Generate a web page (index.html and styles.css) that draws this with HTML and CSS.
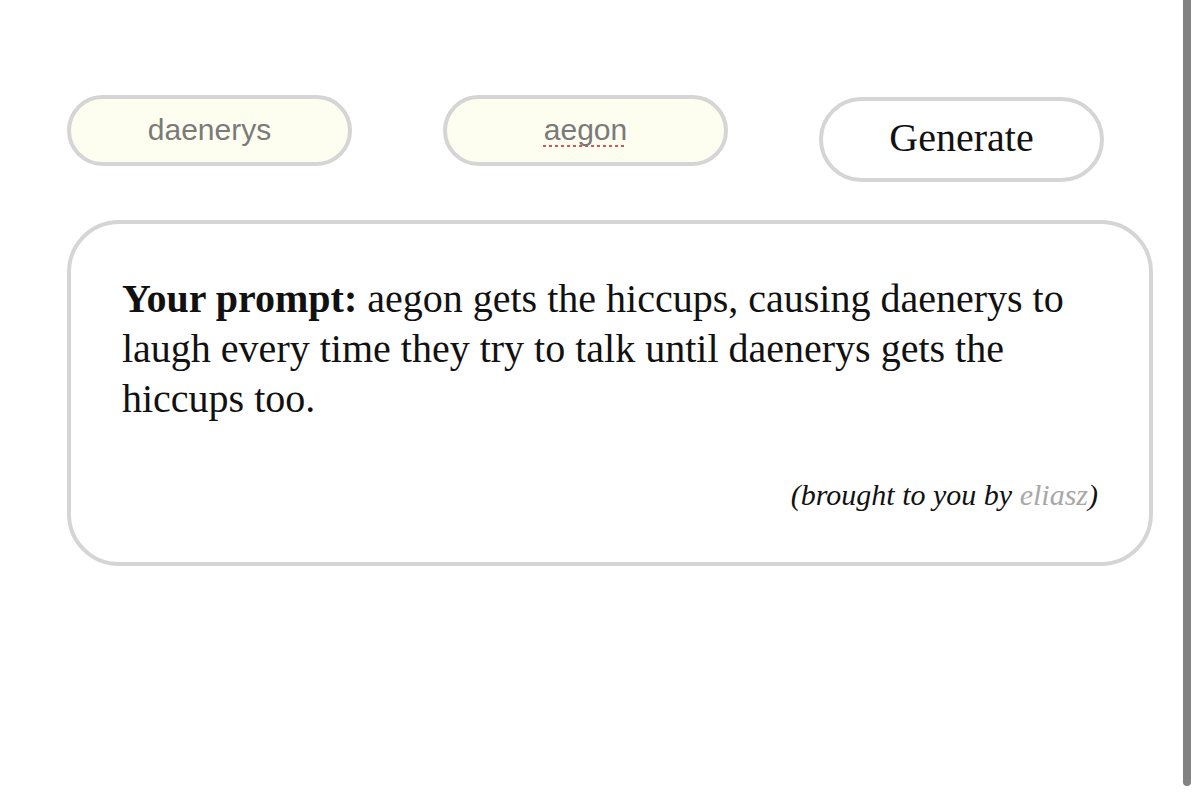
FILE: index.html
```html
<!DOCTYPE html>
<html>
<head>
<meta charset="utf-8">
<link rel="stylesheet" href="styles.css">
</head>
<body>
<div class="page">
  <div class="controls">
    <input class="name-input" type="text" value="daenerys" spellcheck="false">
    <input class="name-input misspelled" type="text" value="aegon" spellcheck="false">
    <button class="generate">Generate</button>
  </div>
  <div class="card">
    <p class="prompt"><b>Your prompt:</b> aegon gets the hiccups, causing daenerys to laugh every time they try to talk until daenerys gets the hiccups too.</p>
    <p class="credit">(brought to you by <span class="author">eliasz</span>)</p>
  </div>
</div>
<div class="scrollbar"></div>
</body>
</html>
```

FILE: styles.css
```css
html, body {
  margin: 0;
  padding: 0;
  background: #ffffff;
  overflow: hidden;
}

.page {
  padding: 95px 0 0 67px;
  width: 1086px;
  font-family: "Liberation Serif", "Times New Roman", serif;
  color: #111;
}

.controls {
  display: flex;
  align-items: flex-start;
  gap: 91px;
}

.name-input {
  box-sizing: border-box;
  width: 285px;
  height: 71px;
  border: 4px solid #d5d5d5;
  border-radius: 36px;
  background: #fefef0;
  font-family: "Liberation Sans", Arial, sans-serif;
  font-size: 30px;
  color: #7a7a7a;
  text-align: center;
  outline: none;
  padding: 0 0 2px;
  margin: 0;
}

.misspelled {
  text-decoration: underline dotted #e0505a;
  text-decoration-thickness: 3px;
  text-underline-offset: 5px;
  text-decoration-skip-ink: none;
}

.generate {
  box-sizing: border-box;
  width: 285px;
  height: 85px;
  margin-top: 2px;
  border: 4px solid #d5d5d5;
  border-radius: 43px;
  background: #ffffff;
  font-family: "Liberation Serif", "Times New Roman", serif;
  font-size: 40px;
  color: #111;
  padding: 0 0 4px;
}

.card {
  box-sizing: border-box;
  margin-top: 38px;
  width: 1086px;
  height: 346px;
  border: 4px solid #d5d5d5;
  border-radius: 52px;
  padding: 50px 51px 0 51px;
}

.prompt {
  margin: 0;
  font-size: 40px;
  line-height: 50px;
}

.prompt b {
  font-weight: bold;
}

.credit {
  margin: 53px 0 0;
  text-align: right;
  font-style: italic;
  font-size: 30px;
  line-height: 36px;
}

.author {
  color: #a8a8a8;
}

.scrollbar {
  position: fixed;
  left: 1183px;
  top: -6px;
  width: 8px;
  height: 792px;
  border-radius: 4px;
  background: #828282;
}
```
